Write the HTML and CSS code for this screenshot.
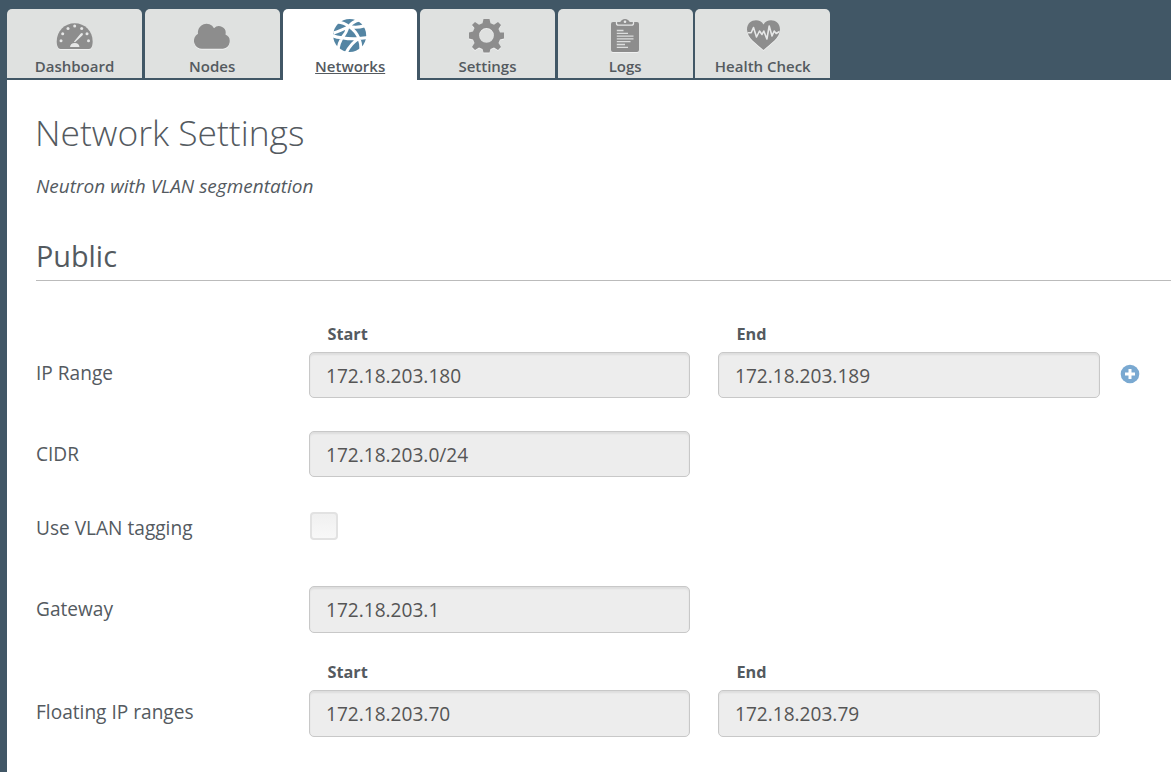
FILE: index.html
```html
<!DOCTYPE html>
<html lang="en">
<head>
<meta charset="utf-8">
<title>Network Settings</title>
<link rel="stylesheet" href="styles.css">
</head>
<body>
<nav class="tabs">
  <a class="tab"><svg class="icon" viewBox="0 0 40 40"><path d="M5.500 35C3 35 1.700 31.500 1.700 27.500C1.700 17 9.500 9.200 19.700 9.200S37.700 17 37.700 27.500C37.700 31.500 36.500 35 34 35Z"/><g class="cut"><circle cx="6" cy="26.700" r="1.500"/><circle cx="7.700" cy="19.800" r="1.500"/><circle cx="13" cy="14.500" r="1.500"/><circle cx="19.700" cy="12" r="1.500"/><circle cx="26.700" cy="14.500" r="1.500"/><circle cx="32" cy="19.800" r="1.500"/><circle cx="33.500" cy="26.700" r="1.500"/><path d="M18.900 27.800L25.500 19.700Q27 18.500 27.800 19.500Q28.300 20.500 27.300 21.500L20 28.300ZM15 33Q15.500 29 19.800 29Q24 29 24.500 33Z"/></g></svg><span>Dashboard</span></a>
  <a class="tab"><svg class="icon" viewBox="0 0 40 40"><path d="M10.800 34.700A8 8 0 0 1 6 19.800A8.600 8.600 0 0 1 22 14.200A6.800 6.800 0 0 1 33.500 20.500A7.500 7.500 0 0 1 31 34.700Z"/></svg><span>Nodes</span></a>
  <a class="tab active"><svg class="icon" viewBox="0 0 40 40"><circle cx="19.700" cy="21.400" r="16.500"/><g class="line"><path d="M7.500 8Q14 8.500 19 12.500Q27 14 34 12M29 6Q22 8 19 12.500Q10 17 3.500 19M18 12.500Q16.500 19 12 23.700Q9 29 8 35M2 21.500Q7 23.500 12 23.700Q21 25.500 29 24.500L38 23.500M19 12.500Q26 17 29 24.500Q31 29 31 36M29 24.500Q21 29 16 39"/></g></svg><span>Networks</span></a>
  <a class="tab"><svg class="icon" viewBox="0 0 40 40"><path fill-rule="evenodd" d="M16.500 5H22.500L23.500 9.300L27 10.800L31 8L34 11L31.500 15L33 18.500H37V24.500L33 25.500L31.500 29L34 33L31 36L27 33.500L23.500 35L22.500 38.500H16.500L15.500 35L12 33.500L8 36L5 33L7.500 29L6 25.500L2 24.500V18.500L6 17.500L7.500 14L5 11L8 8L12 10.800L15.500 9.300ZM19.500 14A7.400 7.400 0 1 0 19.500 28.800A7.400 7.400 0 1 0 19.500 14Z"/></svg><span>Settings</span></a>
  <a class="tab"><svg class="icon" viewBox="0 0 40 40"><rect x="6" y="8" width="28" height="30" rx="2"/><path d="M15 8.500Q16.500 5 20 5T25 8.500Z"/><path class="clip" d="M11.500 8V9.500Q11.500 11.200 13.500 11.200H26.500Q28.500 11.200 28.500 9.500V8"/><circle class="cut" cx="20" cy="7.800" r="1.300"/><path class="text-lines" d="M11.800 16.500H18.500M11.800 19.300H23M11.800 22.100H28.500M11.800 24.900H28.500M11.800 27.700H25.500M11.800 30.500H20M11.800 33.300H23"/></svg><span>Logs</span></a>
  <a class="tab"><svg class="icon" viewBox="0 0 40 40"><path d="M20.500 36C14 30 4 24 4 15.500C4 5.500 16.500 3.500 20.500 10.500C24.500 3.500 37 5.500 37 15.500C37 24 27 30 20.500 36Z"/><path class="pulse" d="M4.500 18.700H8.200L10.500 13.500L13.500 23L16.500 17L19 20.500L20.800 17L23.900 25L26.200 12L29 22L31.200 17L33.200 19.500L36.500 17.500"/></svg><span>Health Check</span></a>
</nav>
<main class="page">
  <h1 class="title">Network Settings</h1>
  <p class="subtitle">Neutron with VLAN segmentation</p>
  <h2 class="section">Public</h2>
  <div class="form">
    <div class="row heads"><span></span><b>Start</b><b>End</b></div>
    <div class="row range"><label>IP Range</label><input class="field" value="172.18.203.180" disabled><input class="field" value="172.18.203.189" disabled><svg class="plus" viewBox="0 0 20 20"><circle cx="10" cy="10" r="9.300"/><path d="M10 5V15M5 10H15"/></svg></div>
    <div class="row cidr"><label>CIDR</label><input class="field" value="172.18.203.0/24" disabled></div>
    <div class="row vlan"><label>Use VLAN tagging</label><span class="check"></span></div>
    <div class="row tall gateway"><label>Gateway</label><input class="field" value="172.18.203.1" disabled></div>
    <div class="row heads floating"><span></span><b>Start</b><b>End</b></div>
    <div class="row tall float-range"><label>Floating IP ranges</label><input class="field" value="172.18.203.70" disabled><input class="field" value="172.18.203.79" disabled></div>
  </div>
</main>
</body>
</html>
```
FILE: styles.css
```css
* { box-sizing: border-box; }
body { margin: 0; height: 772px; overflow: hidden; background: #415766; color: #545a5f; font-family: "Open Sans", sans-serif; font-size: 19px; padding-left: 7px; }

/* Tabs */
.tabs { display: flex; gap: 2.67px; height: 80px; padding-top: 9px; }
.tab { width: 135px; height: 69px; background: #dfe1e0; border-radius: 5px 5px 0 0; display: flex; flex-direction: column; align-items: center; font-size: 15px; font-weight: 600; line-height: 20px; padding-top: 5px; }
.tab.active { width: 134.3px; margin-left: 0.7px; height: 71px; background: #fff; }
.tab.active span { text-decoration: underline; }
.icon { width: 40px; height: 40px; fill: #8d8d8d; margin-bottom: 2px; flex: none; filter: drop-shadow(0 1px 0 #f0f1f1); }
.active .icon { fill: #5485a3; filter: none; }
.cut { fill: #e6e7e7; }
.line { fill: none; stroke: #fff; stroke-width: 3; }
.clip { fill: none; stroke: #e6e7e7; stroke-width: 1.3; stroke-linecap: round; }
.text-lines { fill: none; stroke: #dcdddd; stroke-width: 1.3; }
.pulse { fill: none; stroke: #e6e7e7; stroke-width: 1.6; stroke-linejoin: round; }

/* Page */
.page { background: #fff; height: 692px; padding: 25px 0 0 29px; }
.title { margin: 0 0 0 -1px; font-size: 35.4px; font-weight: 300; line-height: 54px; }
.subtitle { margin: 13px 0 0; font-size: 19px; line-height: 28px; font-style: italic; }
.section { margin: 36px 0 0; font-size: 28.8px; font-weight: 400; line-height: 40px; height: 45px; border-bottom: 1px solid #bbb; }

/* Form rows */
.form { padding-top: 38px; }
.row { display: grid; grid-template-columns: 273px 381px 410px 20px; align-items: center; height: 46px; }
.row > :nth-child(3) { margin-left: 28px; }
.row label { font-size: 19.1px; }
.row.heads { height: 30px; margin-bottom: 3px; font-size: 16.3px; }
.heads b { padding-left: 18.5px; }
.field { height: 46px; border: 1px solid #c8c8c8; border-radius: 5px; background: #ededed; box-shadow: inset 0 2px 2px #0001; padding: 2px 16px 0; color: #555; font: inherit; font-size: 19.1px; }
.row.tall, .tall .field { height: 47px; }
.tall .field { padding-top: 0; }
.range label { margin-bottom: 4px; }
.gateway label { margin-bottom: 2px; }
.float-range label { margin-bottom: 3px; }
.plus { width: 20px; height: 20px; margin: 0 0 2px 20px; fill: #7aa9d1; stroke: #fff; stroke-width: 3; }
.plus circle { stroke: none; }
.cidr { margin-top: 33px; }
.vlan { margin-top: 26px; }
.vlan label { margin-top: 3px; }
.check { width: 28px; height: 28px; margin-left: 1px; border: 2px solid #e2e2e2; border-radius: 4px; background: linear-gradient(#f0f0f0, #f8f8f8); }
.gateway { margin-top: 37px; }
.floating { margin-top: 24px; }
```
